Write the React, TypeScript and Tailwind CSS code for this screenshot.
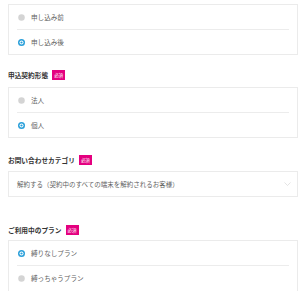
import React from "react";

const font = { fontFamily: '"Noto Sans CJK JP", "Noto Sans", sans-serif' };

function Radio({ checked }: { checked: boolean }) {
  return checked ? (
    <svg width="7" height="7" viewBox="0 0 14 14" className="shrink-0">
      <circle cx="7" cy="7" r="7" fill="#2a9fd9" />
      <circle cx="7" cy="7" r="4" fill="#ffffff" />
      <circle cx="7" cy="7" r="2.2" fill="#2a9fd9" />
    </svg>
  ) : (
    <svg width="7" height="7" viewBox="0 0 14 14" className="shrink-0">
      <circle cx="7" cy="7" r="6.5" fill="#d4d4d4" />
    </svg>
  );
}

function Option({ label, checked }: { label: string; checked: boolean }) {
  return (
    <div className="flex h-[24px] items-center gap-[6px] pl-[9px]">
      <Radio checked={checked} />
      <span className="text-[6.6px] leading-none text-[#5f5f5f]">{label}</span>
    </div>
  );
}

function RadioBox({ options, cut }: { options: { label: string; checked: boolean }[]; cut?: boolean }) {
  return (
    <div className={"border border-[#ebebeb] bg-white " + (cut ? "h-[60px] border-b-0" : "")}>
      <Option label={options[0].label} checked={options[0].checked} />
      <div className="ml-[8px] mr-[8px] h-px bg-[#ececec]" />
      <Option label={options[1].label} checked={options[1].checked} />
    </div>
  );
}

function Heading({ text }: { text: string }) {
  return (
    <div className="flex items-center gap-[4px] h-[10px]">
      <span className="text-[6.7px] leading-none font-semibold text-[#333]">{text}</span>
      <span className="flex h-[10px] w-[13px] items-center justify-center bg-[#e4007f] text-[4.5px] leading-none text-white">
        必須
      </span>
    </div>
  );
}

export default function App() {
  return (
    <div className="h-[291px] w-[300px] overflow-hidden bg-white" style={font}>
      <div className="pl-[8px] pr-[2px] pt-[4px]">
        <RadioBox
          options={[
            { label: "申し込み前", checked: false },
            { label: "申し込み後", checked: true },
          ]}
        />
        <div className="mt-[15px]">
          <Heading text="申込契約形態" />
        </div>
        <div className="mt-[7px]">
          <RadioBox
            options={[
              { label: "法人", checked: false },
              { label: "個人", checked: true },
            ]}
          />
        </div>
        <div className="mt-[17px]">
          <Heading text="お問い合わせカテゴリ" />
        </div>
        <div className="mt-[6px] flex h-[26px] items-center justify-between border border-[#ebebeb] pl-[8px] pr-[6px]">
          <span className="text-[6.5px] leading-none text-[#5f5f5f]">
            解約する（契約中のすべての端末を解約されるお客様）
          </span>
          <svg width="7" height="4" viewBox="0 0 14 8" className="shrink-0">
            <path d="M1 1 L7 7 L13 1" fill="none" stroke="#d8d8d8" strokeWidth="1.4" />
          </svg>
        </div>
        <div className="mt-[28px]">
          <Heading text="ご利用中のプラン" />
        </div>
        <div className="mt-[5px]">
          <RadioBox
            cut
            options={[
              { label: "縛りなしプラン", checked: true },
              { label: "縛っちゃうプラン", checked: false },
            ]}
          />
        </div>
      </div>
    </div>
  );
}
